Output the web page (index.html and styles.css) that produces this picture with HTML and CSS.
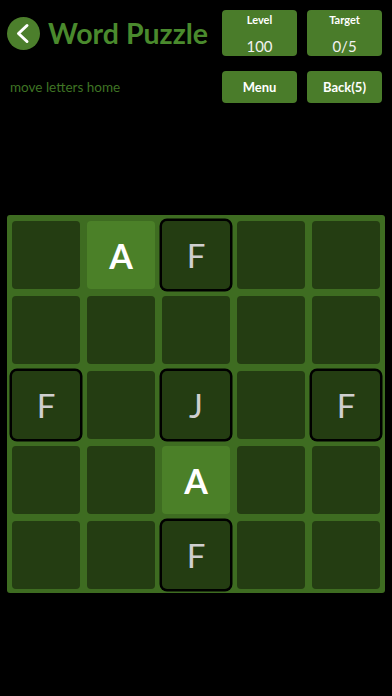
FILE: index.html
```html
<!DOCTYPE html>
<html>
<head>
<meta charset="utf-8">
<link rel="stylesheet" href="styles.css">
</head>
<body>
<div class="page">
  <header class="header">
    <div class="left">
      <div class="title-row">
        <div class="back">
          <svg width="33" height="33" viewBox="0 0 33 33"><circle cx="16.5" cy="16.5" r="16.5" fill="#4c7f2c"/><path d="M20 8.5 L11.5 16.5 L20 24.5" fill="none" stroke="#fff" stroke-width="3" stroke-linecap="round" stroke-linejoin="round"/></svg>
        </div>
        <h1 class="title">Word Puzzle</h1>
      </div>
      <div class="subtitle">move letters home</div>
    </div>
    <div class="buttons">
      <div class="btn stat"><span class="label">Level</span><span class="value">100</span></div>
      <div class="btn stat"><span class="label">Target</span><span class="value">0/5</span></div>
      <div class="btn action">Menu</div>
      <div class="btn action">Back(5)</div>
    </div>
  </header>
  <main class="board">
    <div class="cell"></div>
    <div class="cell light">A</div>
    <div class="cell framed">F</div>
    <div class="cell"></div>
    <div class="cell"></div>

    <div class="cell"></div>
    <div class="cell"></div>
    <div class="cell"></div>
    <div class="cell"></div>
    <div class="cell"></div>

    <div class="cell framed">F</div>
    <div class="cell"></div>
    <div class="cell framed">J</div>
    <div class="cell"></div>
    <div class="cell framed">F</div>

    <div class="cell"></div>
    <div class="cell"></div>
    <div class="cell light">A</div>
    <div class="cell"></div>
    <div class="cell"></div>

    <div class="cell"></div>
    <div class="cell"></div>
    <div class="cell framed">F</div>
    <div class="cell"></div>
    <div class="cell"></div>
  </main>
</div>
</body>
</html>
```
FILE: styles.css
```css
html, body {
  margin: 0;
  padding: 0;
  background: #000;
}
body {
  width: 392px;
  height: 696px;
  overflow: hidden;
  font-family: Lato, "Noto Sans", sans-serif;
}
.page {
  display: flex;
  flex-direction: column;
}
.header {
  display: flex;
  justify-content: space-between;
  padding: 10px 10px 0 7px;
}
.left {
  display: flex;
  flex-direction: column;
}
.title-row {
  display: flex;
  align-items: center;
  gap: 8px;
  margin-top: 6px;
}
.back {
  width: 33px;
  height: 33px;
  display: flex;
}
.title {
  margin: 0;
  font-size: 28.5px;
  font-weight: 700;
  color: #4a8a2d;
  line-height: 34px;
}
.subtitle {
  margin: 29px 0 0 3px;
  font-size: 13.5px;
  color: #3f7424;
  line-height: 16px;
}
.buttons {
  display: grid;
  grid-template-columns: 75px 75px;
  grid-template-rows: 46px 32px;
  column-gap: 10px;
  row-gap: 15px;
}
.btn {
  background: #4a7c2a;
  border-radius: 4px;
  color: #fff;
  display: flex;
  align-items: center;
  justify-content: center;
}
.stat {
  flex-direction: column;
  justify-content: flex-start;
}
.label {
  font-size: 11px;
  font-weight: 700;
  line-height: 13px;
  margin-top: 3px;
}
.value {
  font-size: 15px;
  line-height: 18px;
  margin-top: 11px;
  color: #f2f2f2;
}
.action {
  font-size: 13px;
  font-weight: 700;
}
.board {
  margin: 112px 0 0 7px;
  width: 378px;
  box-sizing: border-box;
  padding: 6px 5px 4px 5px;
  background: #3e6c21;
  border-radius: 3px;
  display: grid;
  grid-template-columns: repeat(5, 68px);
  grid-auto-rows: 68px;
  gap: 7px;
}
.cell {
  background: #243d12;
  border-radius: 4px;
  display: flex;
  align-items: center;
  justify-content: center;
  font-size: 33px;
  color: #cfcfcf;
}
.light {
  background: #4b8028;
  color: #fff;
  font-weight: 700;
  font-size: 34px;
}
.framed {
  box-shadow: 0 0 0 2.5px #000;
  border-radius: 5px;
}
```
